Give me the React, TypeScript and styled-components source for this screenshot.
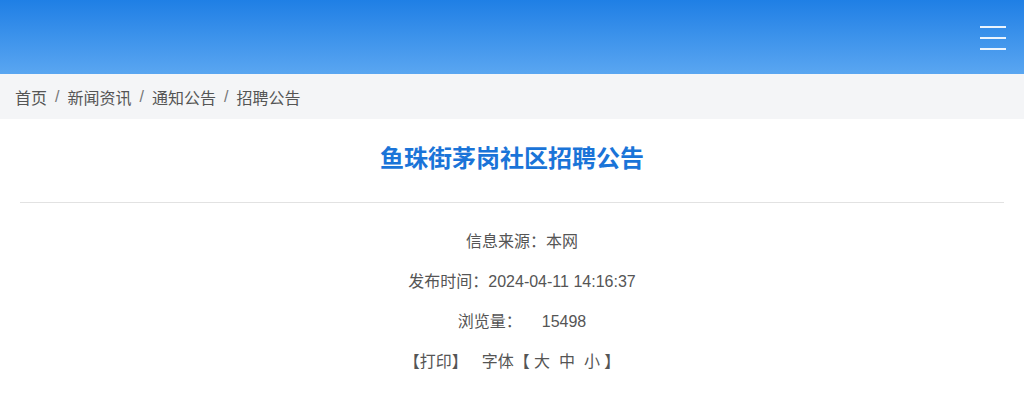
import styled, { createGlobalStyle } from "styled-components";

const GlobalStyle = createGlobalStyle`
  body {
    margin: 0;
    background: #fff;
    font-family: "Liberation Sans", "Noto Sans CJK SC", sans-serif;
  }
`;

const Header = styled.header`
  height: 74px;
  background: linear-gradient(180deg, #1f7fe5 0%, #5aa6f1 100%);
  display: flex;
  justify-content: flex-end;
  align-items: center;
  padding-right: 18px;
  box-sizing: border-box;
`;

const MenuButton = styled.button`
  width: 26px;
  height: 24px;
  padding: 0;
  border: none;
  background: none;
  display: flex;
  flex-direction: column;
  justify-content: space-between;
  cursor: pointer;
  margin-top: 2px;
`;

const MenuLine = styled.span`
  display: block;
  height: 2px;
  width: 100%;
  background: rgba(255, 255, 255, 0.9);
`;

const Crumbs = styled.nav`
  height: 45px;
  background: #f4f5f7;
  display: flex;
  align-items: center;
  padding-left: 15px;
  font-size: 16px;
  color: #555;
`;

const Crumb = styled.a`
  color: #555;
  text-decoration: none;
`;

const Sep = styled.span`
  margin: 0 8px;
  color: #777;
`;

const Article = styled.main`
  padding: 0 20px;
`;

const Title = styled.h1`
  margin: 0;
  padding: 20px 0 23px;
  line-height: 40px;
  font-size: 24px;
  font-weight: bold;
  text-align: center;
  color: #1a74d8;
  border-bottom: 1px solid #e2e2e2;
`;

const Meta = styled.div`
  padding-top: 19px;
  display: flex;
  flex-direction: column;
  align-items: center;
  font-size: 16px;
  color: #555;
`;

const MetaLine = styled.div<{ $indent?: number }>`
  line-height: 40px;
  white-space: pre;
  padding-left: ${(p) => p.$indent ?? 0}px;
`;

const Gap = styled.span<{ $w: number }>`
  display: inline-block;
  width: ${(p) => p.$w}px;
`;

const Tool = styled.a`
  color: #555;
  text-decoration: none;
  cursor: pointer;
`;

function App() {
  return (
    <>
      <GlobalStyle />
      <Header>
        <MenuButton aria-label="菜单">
          <MenuLine />
          <MenuLine />
          <MenuLine />
        </MenuButton>
      </Header>
      <Crumbs>
        <Crumb>首页</Crumb>
        <Sep>/</Sep>
        <Crumb>新闻资讯</Crumb>
        <Sep>/</Sep>
        <Crumb>通知公告</Crumb>
        <Sep>/</Sep>
        <Crumb>招聘公告</Crumb>
      </Crumbs>
      <Article>
        <Title>鱼珠街茅岗社区招聘公告</Title>
        <Meta>
          <MetaLine $indent={20}>信息来源：本网</MetaLine>
          <MetaLine $indent={20}>发布时间：2024-04-11 14:16:37</MetaLine>
          <MetaLine $indent={20}>
            浏览量：<Gap $w={20} />15498
          </MetaLine>
          <MetaLine>
            <Tool>【打印】</Tool>
            <Gap $w={14} />
            字体【 <Tool>大</Tool>  <Tool>中</Tool>  <Tool>小</Tool> 】
          </MetaLine>
        </Meta>
      </Article>
    </>
  );
}

export default App;
